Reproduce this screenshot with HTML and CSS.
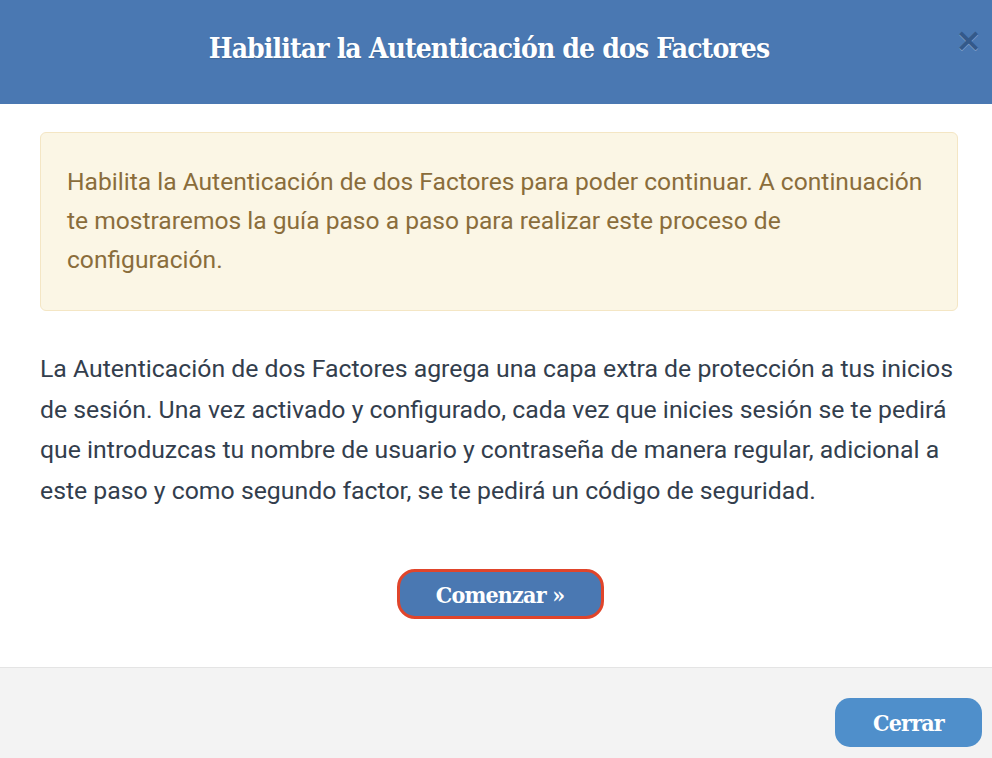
FILE: index.html
```html
<!DOCTYPE html>
<html lang="es">
<head>
<meta charset="utf-8">
<title>Habilitar la Autenticación de dos Factores</title>
<link rel="stylesheet" href="styles.css">
</head>
<body>
<div class="modal">
  <header class="modal-header">
    <h1 class="modal-title">Habilitar la Autenticación de dos Factores</h1>
    <button class="close" aria-label="Cerrar">×</button>
  </header>
  <main class="modal-body">
    <div class="alert">Habilita la Autenticación de dos Factores para poder continuar. A continuación te mostraremos la guía paso a paso para realizar este proceso de configuración.</div>
    <p class="intro">La Autenticación de dos Factores agrega una capa extra de protección a tus inicios de sesión. Una vez activado y configurado, cada vez que inicies sesión se te pedirá que introduzcas tu nombre de usuario y contraseña de manera regular, adicional a este paso y como segundo factor, se te pedirá un código de seguridad.</p>
    <div class="actions">
      <button class="btn btn-start">Comenzar »</button>
    </div>
  </main>
  <footer class="modal-footer">
    <button class="btn btn-close">Cerrar</button>
  </footer>
</div>
</body>
</html>
```
FILE: styles.css
```css
* { box-sizing: border-box; }
html, body { margin: 0; padding: 0; }
body {
  background: #fff;
  font-family: Roboto, "Liberation Sans", sans-serif;
}
.modal {
  display: flex;
  flex-direction: column;
  height: 100vh;
  width: 100%;
}
.modal-header {
  position: relative;
  height: 104px;
  background: #4a78b2;
  display: flex;
  align-items: center;
  justify-content: center;
  padding-bottom: 8px;
}
.modal-title {
  margin: 0;
  color: #fff;
  font-family: "DejaVu Serif Condensed", "DejaVu Serif", serif;
  font-stretch: condensed;
  font-weight: bold;
  font-size: 28px;
  letter-spacing: -0.85px;
  padding-right: 14px;
  text-shadow: 0 1px 1px rgba(0,0,0,0.15);
}
.close {
  position: absolute;
  top: 25px;
  right: 10px;
  background: none;
  border: 0;
  padding: 0;
  color: #34598a;
  font-family: "DejaVu Sans", sans-serif;
  font-weight: bold;
  font-size: 32px;
  line-height: 30px;
  text-shadow: 0 1px 0 rgba(255,255,255,0.3);
}
.modal-body {
  flex: 1;
  padding: 28px 34px 0 40px;
}
.alert {
  background: #fbf6e5;
  border: 1px solid #f4e6c4;
  border-radius: 6px;
  color: #8a6d3b;
  font-size: 24.6px;
  line-height: 39px;
  padding: 29px 30px 31px 26px;
}
.intro {
  margin: 38px 0 0;
  color: #333e4d;
  font-size: 24.8px;
  line-height: 40.5px;
}
.actions {
  display: flex;
  justify-content: center;
  margin-top: 58px;
  padding-left: 2px;
}
.btn {
  border: 0;
  color: #fff;
  font-family: "DejaVu Serif Condensed", "DejaVu Serif", serif;
  font-stretch: condensed;
  font-weight: bold;
  font-size: 23px;
  letter-spacing: -0.8px;
  cursor: pointer;
}
.btn-start {
  width: 207px;
  height: 50px;
  background: #4a78b2;
  border: 3px solid #e0452b;
  border-radius: 18px;
}
.modal-footer {
  height: 91px;
  border-top: 1px solid #e4e4e4;
  background: #f3f3f3;
  display: flex;
  justify-content: flex-end;
  align-items: flex-start;
  padding: 30px 10px 0 0;
}
.btn-close {
  width: 147px;
  height: 49px;
  background: #4f8fcb;
  border-radius: 15px;
}
```
